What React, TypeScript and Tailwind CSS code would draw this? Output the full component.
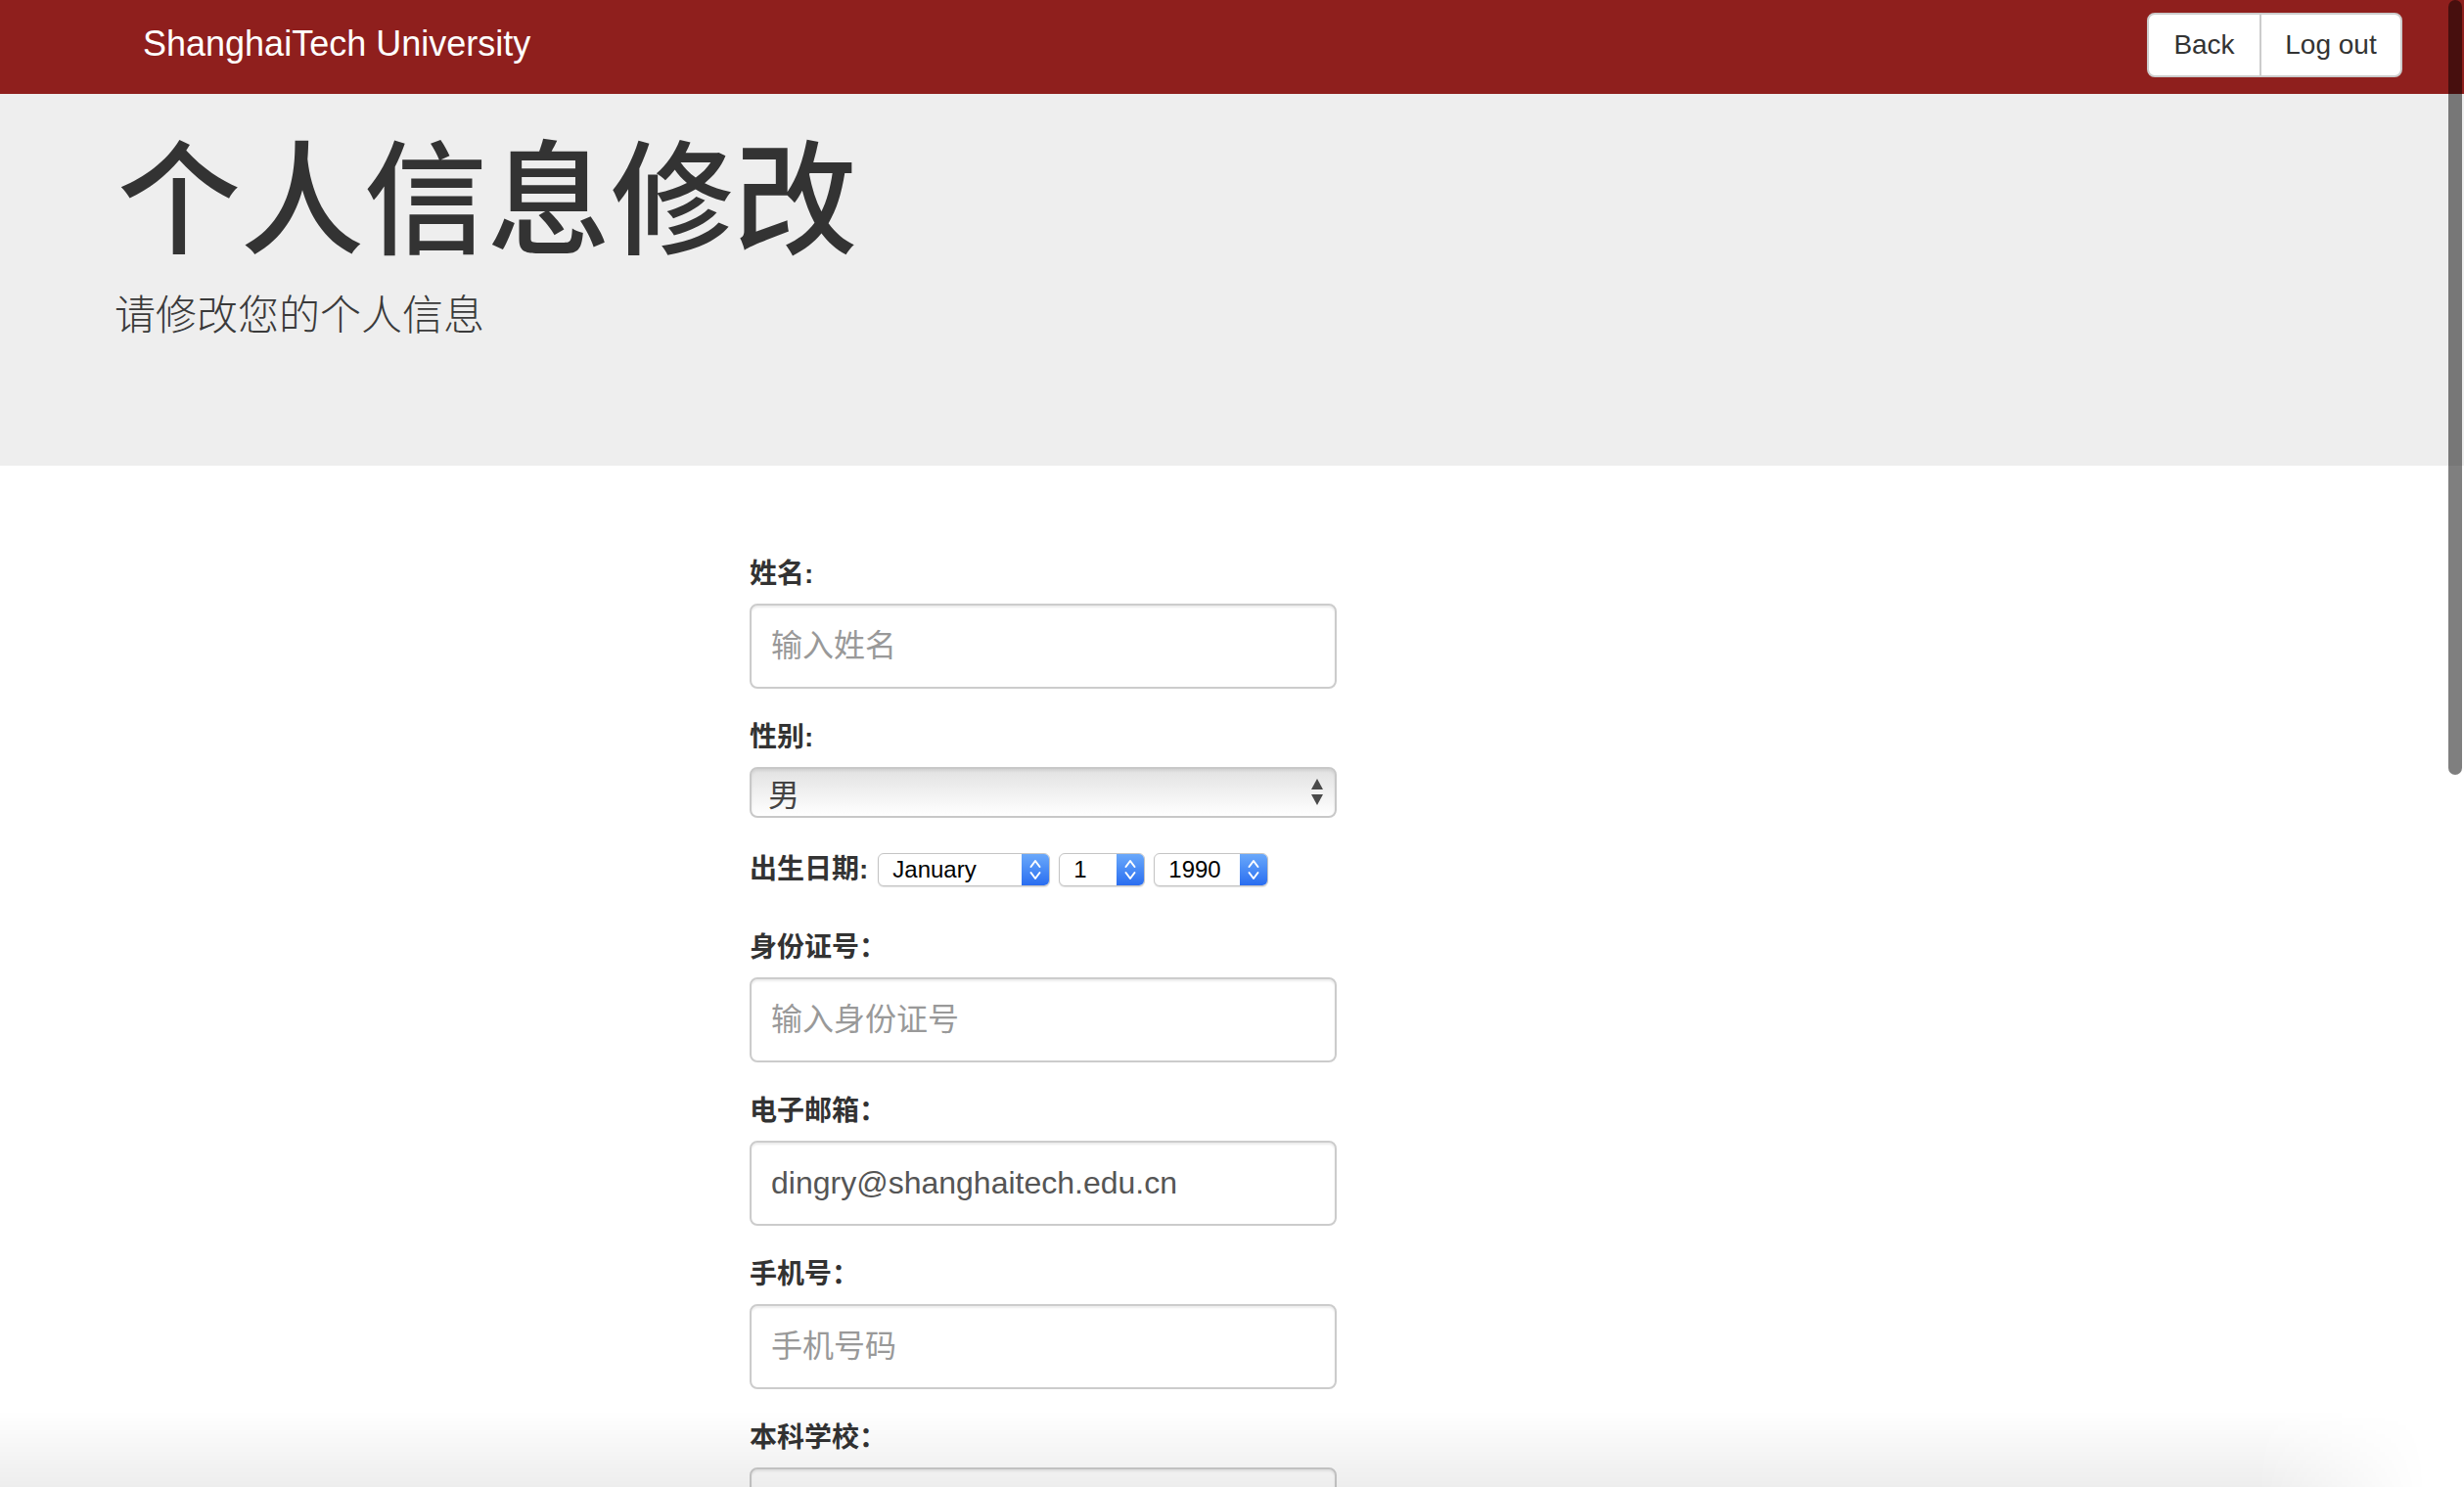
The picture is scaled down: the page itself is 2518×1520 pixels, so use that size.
import React from "react";

function Field({
  label,
  placeholder,
  value,
}: {
  label: string;
  placeholder?: string;
  value?: string;
}) {
  return (
    <div className="mb-[30px]">
      <div className="mb-[10px] h-[40px] text-[28px] font-bold leading-[40px] text-[#333]">{label}</div>
      <input
        className="box-border block h-[87px] w-full rounded-[8px] border-2 border-[#ccc] bg-white px-[20px] text-[32px] text-[#555] shadow-[inset_0_2px_2px_rgba(0,0,0,0.075)] outline-none placeholder:text-[#999]"
        placeholder={placeholder}
        defaultValue={value}
      />
    </div>
  );
}

function BlueStepper() {
  return (
    <div className="flex h-full w-[28px] items-center justify-center rounded-r-[5px] bg-linear-to-b from-[#6aa8fa] to-[#2a6df0]">
      <svg width="14" height="28" viewBox="0 0 14 28" fill="none">
        <path d="M2.5 11 L7 5 L11.5 11" stroke="white" strokeWidth="2" strokeLinecap="round" strokeLinejoin="round" />
        <path d="M2.5 17 L7 23 L11.5 17" stroke="white" strokeWidth="2" strokeLinecap="round" strokeLinejoin="round" />
      </svg>
    </div>
  );
}

function MiniSelect({ text, width }: { text: string; width: string }) {
  return (
    <div
      className={`flex h-[34px] ${width} items-stretch rounded-[6px] border border-[#c4c4c4] bg-white shadow-[0_1px_1px_rgba(0,0,0,0.12)]`}
    >
      <div className="flex flex-1 items-center pl-[14px] font-['Liberation_Sans',sans-serif] text-[24px] text-black">{text}</div>
      <BlueStepper />
    </div>
  );
}

export default function App() {
  return (
    <div className="relative h-[1520px] w-[2518px] overflow-hidden bg-white font-['Liberation_Sans','Noto_Sans_CJK_SC',sans-serif] text-[#333]">
      {/* Navbar */}
      <nav className="flex h-[96px] justify-between bg-[#8f1f1d] pl-[146px] pr-[63px]">
        <span className="mt-[27px] self-start text-[36px] leading-none text-white">ShanghaiTech University</span>
        <div className="mt-[13px] flex h-[66px] self-start overflow-hidden rounded-[8px] border-2 border-[#ccc] bg-white text-[28px] leading-none text-[#333]">
          <button className="flex w-[113px] items-center justify-center">Back</button>
          <button className="flex w-[144px] items-center justify-center border-l-2 border-[#ccc]">Log out</button>
        </div>
      </nav>

      {/* Jumbotron */}
      <header className="h-[380px] bg-[#eeeeee] pl-[120px] pt-[30px]">
        <h1 className="font-['Noto_Sans_CJK_SC',sans-serif] text-[126px] font-medium leading-[1.1] text-[#333]">
          个人信息修改
        </h1>
        <p className="mt-[25px] -ml-[3px] font-['Noto_Sans_CJK_SC',sans-serif] text-[42px] font-light leading-[1.4] text-[#3a3a3a]">
          请修改您的个人信息
        </p>
      </header>

      {/* Form */}
      <main className="ml-[766px] w-[600px] pt-[91px]">
        <Field label="姓名:" placeholder="输入姓名" />

        <div className="mb-[36px]">
          <div className="mb-[10px] h-[40px] text-[28px] font-bold leading-[40px] text-[#333]">性别:</div>
          <div className="flex h-[52px] items-center justify-between rounded-[8px] border-2 border-[#c8c8c8] bg-linear-to-b from-[#e2e2e2] to-white pl-[17px] pr-[11px] shadow-[inset_0_2px_3px_rgba(0,0,0,0.08)]">
            <span className="font-['Noto_Sans_CJK_SC',sans-serif] text-[32px] leading-none text-[#444]">男</span>
            <svg width="14" height="30" viewBox="0 0 14 30">
              <path d="M7 1 L13 12 L1 12 Z" fill="#4a4a4a" />
              <path d="M1 17 L13 17 L7 28 Z" fill="#4a4a4a" />
            </svg>
          </div>
        </div>

        <div className="mb-[43px] flex h-[34px] items-center gap-[9px]">
          <span className="mr-[1px] text-[28px] font-bold leading-[34px] text-[#333]">出生日期:</span>
          <MiniSelect text="January" width="w-[176px]" />
          <MiniSelect text="1" width="w-[88px]" />
          <MiniSelect text="1990" width="w-[117px]" />
        </div>

        <Field label="身份证号：" placeholder="输入身份证号" />
        <Field label="电子邮箱：" value="dingry@shanghaitech.edu.cn" />
        <Field label="手机号：" placeholder="手机号码" />
        <Field label="本科学校：" placeholder="" />
      </main>

      {/* bottom window shade */}
      <div className="pointer-events-none absolute bottom-0 left-0 h-[78px] w-[2480px] bg-linear-to-b from-transparent to-black/[0.07] [mask-image:linear-gradient(to_right,black_93%,transparent)]" />

      {/* overlay scrollbar thumb */}
      <div className="pointer-events-none absolute right-[2px] top-0 h-[792px] w-[14px] rounded-full bg-black/50" />
    </div>
  );
}
